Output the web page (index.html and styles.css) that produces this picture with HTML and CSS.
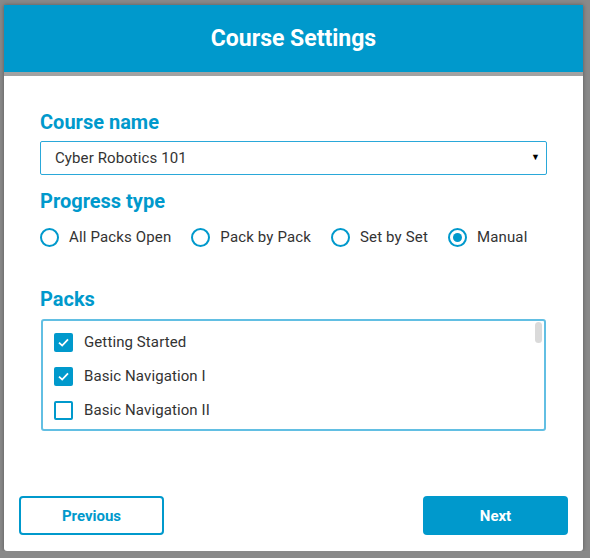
FILE: index.html
```html
<!DOCTYPE html>
<html lang="en">
<head>
	<meta charset="UTF-8">
	<title>Course Settings</title>
<link rel="stylesheet" href="styles.css">
</head>

<body>
    <div class="dialog">
        <header class="dialog-head">
            <h1>Course Settings</h1>
        </header>
        <section class="dialog-body">
            <h2 class="field-title">Course name</h2>
            <div class="select-wrap">
                <select id="course_name" class="select">
                    <option>Cyber Robotics 101</option>
                    <option>Cyber Robotics 102</option>
                </select>
            </div>

            <h2 class="field-title">Progress type</h2>
            <div class="radio-row">
                <label class="radio"><span class="radio-dot"></span>All Packs Open</label>
                <label class="radio"><span class="radio-dot"></span>Pack by Pack</label>
                <label class="radio"><span class="radio-dot"></span>Set by Set</label>
                <label class="radio"><span class="radio-dot checked"></span>Manual</label>
            </div>

            <h2 class="field-title packs-title">Packs</h2>
            <div class="pack-list">
                <label class="pack"><span class="box checked"><svg viewBox="0 0 19 19" width="19" height="19"><path d="M5 9.6 L8.2 12.6 L14 6.4" fill="none" stroke="#fff" stroke-width="1.8"/></svg></span>Getting Started</label>
                <label class="pack"><span class="box checked"><svg viewBox="0 0 19 19" width="19" height="19"><path d="M5 9.6 L8.2 12.6 L14 6.4" fill="none" stroke="#fff" stroke-width="1.8"/></svg></span>Basic Navigation I</label>
                <label class="pack"><span class="box"></span>Basic Navigation II</label>
                <span class="scroll-thumb"></span>
            </div>
        </section>
        <footer class="dialog-foot">
            <button class="btn btn-outline">Previous</button>
            <button class="btn btn-fill">Next</button>
        </footer>
    </div>
</body>
</html>
```

FILE: styles.css
```css
body {
    margin: 0;
    background-color: #898989;
    font-family: Roboto, "Liberation Sans", sans-serif;
}

.dialog {
    box-sizing: border-box;
    width: 579px;
    height: 546px;
    margin: 5px 0 0 4px;
    background-color: #fff;
    border-radius: 0 0 3px 3px;
    box-shadow: 0 0 4px rgba(0, 0, 0, 0.35);
    display: flex;
    flex-direction: column;
}

.dialog-head {
    height: 67px;
    background-color: #0099cc;
    border-bottom: 4px solid #a2a2a2;
    display: flex;
    align-items: center;
    justify-content: center;
}

.dialog-head h1 {
    margin: 0;
    color: #fff;
    font-size: 23px;
    font-weight: 700;
}

.dialog-body {
    padding: 34px 36px 0 36px;
}

.field-title {
    margin: 0;
    color: #0099cc;
    font-size: 20px;
    font-weight: 700;
    line-height: 24px;
}

.select-wrap {
    position: relative;
    margin: 7px 0 14px;
}
.select-wrap::after {
    content: "\25BC";
    position: absolute;
    right: 7px;
    top: 11px;
    font-size: 9px;
    color: #000;
    pointer-events: none;
}

.select {
    display: block;
    box-sizing: border-box;
    width: 507px;
    height: 34px;
    padding: 0 14px;
    border: 1.5px solid #2aa8d9;
    border-radius: 2px;
    background: #fff;
    color: #333;
    font-family: Roboto, "Liberation Sans", sans-serif;
    font-size: 15px;
    letter-spacing: 0.1px;
    -webkit-appearance: none;
    appearance: none;
    outline: none;
}

.radio-row {
    display: flex;
    gap: 20px;
    margin-top: 14px;
    height: 20px;
}

.radio {
    display: flex;
    align-items: center;
    gap: 10px;
    color: #333;
    font-size: 15px;
    letter-spacing: 0.15px;
}

.radio-dot {
    box-sizing: border-box;
    width: 19px;
    height: 19px;
    border: 2px solid #0099cc;
    border-radius: 50%;
    display: flex;
    align-items: center;
    justify-content: center;
}
.radio-dot.checked::after {
    content: "";
    width: 9px;
    height: 9px;
    border-radius: 50%;
    background-color: #0099cc;
}

.packs-title {
    margin-top: 40px;
}

.pack-list {
    position: relative;
    box-sizing: border-box;
    width: 505px;
    height: 112px;
    margin: 8px 0 0 1px;
    padding: 4px 0 0 11px;
    border: 2px solid #62bfe3;
    border-radius: 3px;
    overflow: hidden;
}

.scroll-thumb {
    position: absolute;
    top: 1px;
    right: 2px;
    width: 7px;
    height: 21px;
    border-radius: 4px;
    background-color: #dadada;
}

.pack {
    display: flex;
    align-items: center;
    gap: 11px;
    height: 34px;
    color: #333;
    font-size: 15px;
    letter-spacing: 0.1px;
}

.box {
    box-sizing: border-box;
    width: 19px;
    height: 19px;
    border: 2px solid #0099cc;
    border-radius: 2px;
}
.box.checked {
    border: 0;
    background-color: #0099cc;
}
.box svg {
    display: block;
}

.dialog-foot {
    margin-top: auto;
    padding: 0 15px 16px 15px;
    display: flex;
    justify-content: space-between;
}

.btn {
    box-sizing: border-box;
    width: 145px;
    height: 39px;
    border-radius: 4px;
    font-family: Roboto, "Liberation Sans", sans-serif;
    font-size: 15px;
    font-weight: 700;
    cursor: pointer;
}
.btn-outline {
    background: #fff;
    border: 2px solid #0099cc;
    color: #0099cc;
}
.btn-fill {
    background: #0099cc;
    border: 0;
    color: #fff;
}
```
